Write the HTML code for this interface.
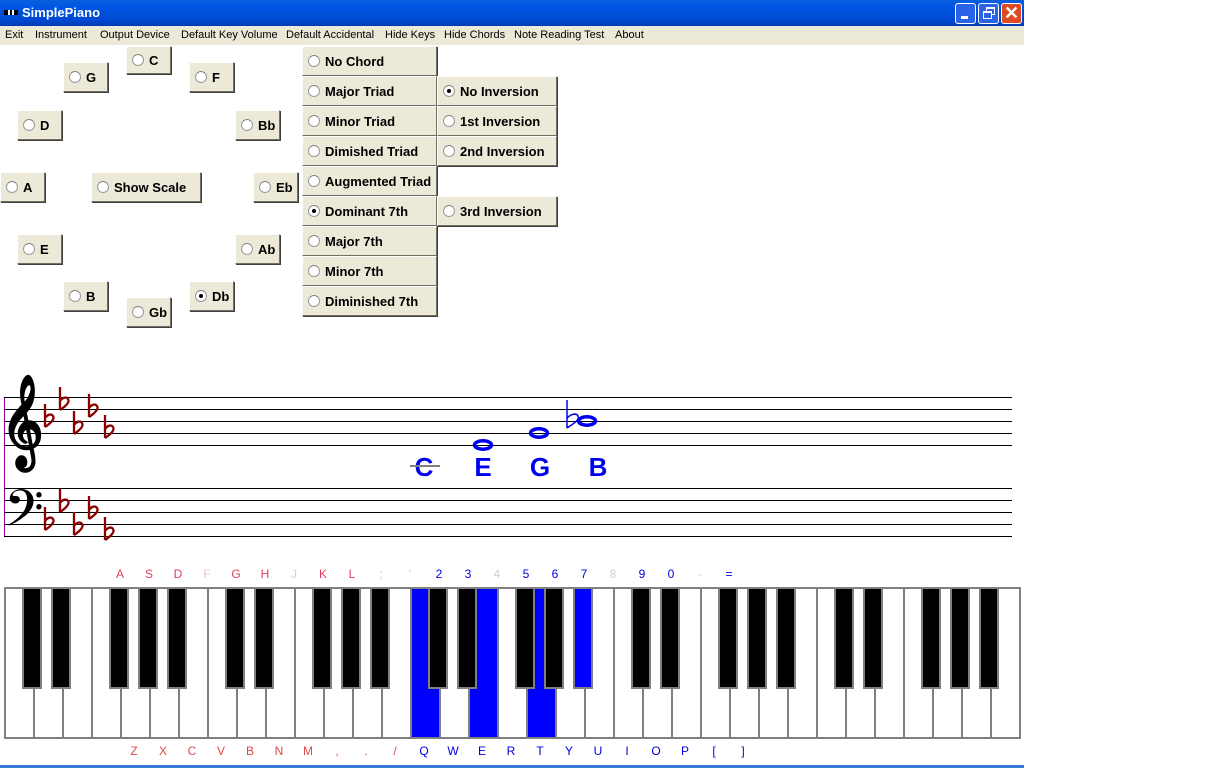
<!DOCTYPE html>
<html><head><meta charset="utf-8">
<style>
*{margin:0;padding:0;box-sizing:border-box}
body{width:1212px;height:768px;background:#fff;position:relative;overflow:hidden;font-family:"Liberation Sans",Arial,sans-serif}
.abs{position:absolute}
#title{left:0;top:0;width:1024px;height:26px;background:linear-gradient(#0a5fe0,#0054e3 30%,#0048d0 80%,#003bb0);}
#title span{position:absolute;left:22px;top:5px;color:#fff;font-weight:bold;font-size:13px}
.wb{position:absolute;top:3px;width:21px;height:21px;border:1px solid #fff;border-radius:3px;background:#2a63e8}
#menu{left:0;top:26px;width:1024px;height:19px;background:#ece9d8;font-size:11px;color:#000}
#menu span{position:absolute;top:3px}
.btn{position:absolute;background:#ece9d8;border-top:1px solid #fff;border-left:1px solid #fff;border-right:1px solid #716f64;border-bottom:1px solid #716f64;box-shadow:1px 1px 0 #404040;font-weight:bold;font-size:13px;color:#000;white-space:nowrap}
.btn i{position:absolute;left:5px;width:12px;height:12px;border-radius:50%;background:#fff;border:1px solid #9a9a9a;border-top-color:#808080}
.btn i.on::after{content:"";position:absolute;left:3px;top:3px;width:4px;height:4px;border-radius:50%;background:#000}
.btn b{position:absolute;left:22px}
.line{position:absolute;left:4px;width:1008px;height:1px;background:#000}
.lbl{position:absolute;font-size:12px;width:20px;text-align:center}
.nl{position:absolute;top:452px;color:#0000f0;font-weight:bold;font-size:26px;width:30px;text-align:center}
</style></head><body>
<div id="title" class="abs"><div class="abs" style="left:4px;top:10px;width:14px;height:5px;border-left:2px solid #000;border-right:2px solid #000;background:repeating-linear-gradient(90deg,#000 0 2px,#fff 2px 4px)"></div><span>SimplePiano</span>
<div class="wb" style="left:955px"><div class="abs" style="left:5px;top:12px;width:7px;height:3px;background:#fff"></div></div>
<div class="wb" style="left:978px"><div class="abs" style="left:7px;top:3px;width:9px;height:8px;border:1px solid #fff;border-top-width:2px"></div><div class="abs" style="left:4px;top:7px;width:9px;height:8px;border:1px solid #fff;border-top-width:2px;background:#2a63e8"></div></div>
<div class="wb" style="left:1001px;background:#e04a22;color:#fff;font-size:18px;font-weight:bold;text-align:center;line-height:19px">✕</div>
</div>
<div id="menu" class="abs">
<span style="left:5px">Exit</span><span style="left:35px">Instrument</span><span style="left:100px">Output Device</span><span style="left:181px">Default Key Volume</span><span style="left:286px">Default Accidental</span><span style="left:385px">Hide Keys</span><span style="left:444px">Hide Chords</span><span style="left:514px">Note Reading Test</span><span style="left:615px">About</span>
</div>
<div id="btns"></div>
<div class="abs" style="left:4px;top:397px;width:1px;height:140px;background:#a000a0"></div>
<div id="staff"></div>
<div class="abs" style="left:1px;top:381px;font-size:80px;line-height:1;font-family:'DejaVu Sans',sans-serif;color:#000;transform:scaleX(0.9);transform-origin:left top;font-weight:bold">𝄞</div>
<div class="abs" style="left:4px;top:484px;font-size:62px;line-height:1;font-family:'DejaVu Sans',sans-serif;color:#000">𝄢</div>
<div class="abs" style="left:410px;top:465px;width:30px;height:2px;background:#808080;z-index:2"></div>
<svg class="abs" style="left:0;top:0" width="1212" height="768">
<g id="flats" fill="none" stroke="#8b0000" stroke-width="2.3"></g>
<g fill="none" stroke="#0000f0" stroke-width="3.5">
<ellipse cx="483" cy="445" rx="8.5" ry="4.2"/>
<ellipse cx="539" cy="433" rx="8.5" ry="4.2"/>
<ellipse cx="587" cy="421" rx="8.5" ry="4.2"/>
</g>
<path d="M567 400V428M567 428C573 424 580 420 578 416C576 412 570 415 567 418" stroke="#0000f0" stroke-width="1.5" fill="none"/>
</svg>
<div class="nl" style="left:409px">C</div><div class="nl" style="left:468px">E</div><div class="nl" style="left:525px">G</div><div class="nl" style="left:583px">B</div>
<div id="kb"></div>
<div class="abs" style="left:0;top:765px;width:1024px;height:3px;background:#3a78d8"></div>
<script>
var b=document.getElementById('btns'),h='';
function btn(x,y,w,hh,t,on){h+='<div class="btn" style="left:'+x+'px;top:'+y+'px;width:'+w+'px;height:'+hh+'px"><i class="'+(on?'on':'')+'" style="top:'+((hh-14)/2)+'px"></i><b style="top:'+((hh-17)/2)+'px">'+t+'</b></div>';}
btn(126,46,45,28,'C');btn(63,62,45,30,'G');btn(189,62,45,30,'F');btn(17,110,45,30,'D');btn(235,110,45,30,'Bb');
btn(0,172,45,30,'A');btn(91,172,110,30,'Show Scale');btn(253,172,45,30,'Eb');btn(17,234,45,30,'E');btn(235,234,45,30,'Ab');
btn(63,281,45,30,'B');btn(189,281,45,30,'Db',1);btn(126,297,45,30,'Gb');
var ch=['No Chord','Major Triad','Minor Triad','Dimished Triad','Augmented Triad','Dominant 7th','Major 7th','Minor 7th','Diminished 7th'];
ch.forEach(function(c,i){btn(302,46+30*i,135,30,c,i==5)});
btn(437,76,120,30,'No Inversion',1);btn(437,106,120,30,'1st Inversion');btn(437,136,120,30,'2nd Inversion');btn(437,196,120,30,'3rd Inversion');
b.innerHTML=h;
var s='';[397,409,421,433,445,488,500,512,524,536].forEach(function(y){s+='<div class="line" style="top:'+y+'px"></div>'});
document.getElementById('staff').innerHTML=s;
var fl=[[45,420],[60,403],[74,427],[89,410],[105,431],[45,523],[60,505],[74,528],[89,512],[105,533]];
var fp='';
fl.forEach(function(p){var x=p[0],y=p[1];fp+='<path d="M'+x+' '+(y-16)+'V'+(y+7)+'M'+x+' '+(y+7)+'C'+(x+6)+' '+(y+3)+' '+(x+10)+' '+(y-1)+' '+(x+8)+' '+(y-4)+'C'+(x+6)+' '+(y-7)+' '+(x+2)+' '+(y-5)+' '+x+' '+(y-2)+'"/>'});
document.getElementById('flats').innerHTML=fp;
var k='';var blueW={14:1,16:1,18:1};
for(var i=0;i<35;i++){var x=4+29*i;k+='<div class="abs" style="left:'+x+'px;top:587px;width:31px;height:152px;border:2px solid #808080;background:'+(blueW[i]?'#0000ff':'#fff')+'"></div>';}
var off=[18,47,105,134,163];
for(var o=0;o<5;o++)off.forEach(function(d,j){var x=4+203*o+d;var blue=(o==2&&j==4);k+='<div class="abs" style="left:'+x+'px;top:587px;width:20px;height:102px;border:2px solid #808080;background:'+(blue?'#0000ff':'#000')+'"></div>';});
var tl=[['A','#e04060'],['S','#e04060'],['D','#e04060'],['F','#e0c8d0'],['G','#e04060'],['H','#e04060'],['J','#d8d0d8'],['K','#e04060'],['L','#e04060'],[';','#f0b090'],["'",'#d0d0d0'],['2','#0000e0'],['3','#0000e0'],['4','#d0d0d0'],['5','#0000e0'],['6','#0000e0'],['7','#0000e0'],['8','#d0d0d0'],['9','#0000e0'],['0','#0000e0'],['-','#d0d0d0'],['=','#0000e0']];
tl.forEach(function(t,i){k+='<div class="lbl" style="left:'+(110+29*i)+'px;top:567px;color:'+t[1]+'">'+t[0]+'</div>'});
var bot='ZXCVBNM,./QWERTYUIOP[]';
for(var i=0;i<bot.length;i++){k+='<div class="lbl" style="left:'+(124+29*i)+'px;top:744px;color:'+(i<10?'#e04848':'#0000e0')+'">'+bot[i]+'</div>'}
document.getElementById('kb').innerHTML=k;
</script>
</body></html>
